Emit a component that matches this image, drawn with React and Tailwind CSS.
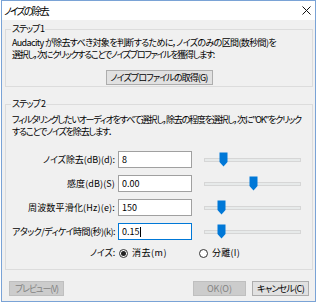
import React, { useLayoutEffect, useRef, useState } from "react";

const font = { fontFamily: '"Noto Sans CJK JP", "Noto Sans", sans-serif' };

// Squeeze/stretch a line of text to the width it has in the original dialog
const Fit = ({ w, children, className = "" }) => {
  const ref = useRef(null);
  const [ls, setLs] = useState(0);

  useLayoutEffect(() => {
    const el = ref.current;
    if (!el) return;
    const n = [...el.textContent].length;
    const natural = el.getBoundingClientRect().width;
    setLs((w - natural) / n);
  }, [w]);

  return (
    <span
      ref={ref}
      className={`inline-block whitespace-nowrap ${className}`}
      style={{ letterSpacing: `${ls}px` }}
    >
      {children}
    </span>
  );
};

// Slider thumb shaped like the Windows trackbar pointer
const Thumb = () => (
  <svg width="9" height="15" viewBox="0 0 9 15" className="block">
    <path d="M0.5 0.5 H8.5 V10 L4.5 14.5 L0.5 10 Z" fill="#0078d7" />
  </svg>
);

const Slider = ({ pos }) => (
  <div className="relative w-[97px] h-[17px] flex items-center">
    <div className="w-full h-[4px] bg-[#e7eaea] border border-[#d6d6d6]" />
    <div className="absolute top-[1px]" style={{ left: `${pos}px` }}>
      <Thumb />
    </div>
  </div>
);

const rows = [
  { label: "ノイズ除去(dB)(d):", w: 72, value: "8", pos: 15 },
  { label: "感度(dB)(S)", w: 48, value: "0.00", pos: 45 },
  { label: "周波数平滑化(Hz)(e):", w: 87, value: "150", pos: 13 },
  { label: "アタック/ディケイ時間(秒)(k):", w: 103, value: "0.15", pos: 13, focus: true },
];

const Radio = ({ checked, label, w }) => (
  <div className="flex items-center gap-[4px]">
    <div className="w-[9px] h-[9px] rounded-full border border-[#333] bg-white flex items-center justify-center">
      {checked && <div className="w-[5px] h-[5px] rounded-full bg-[#222]" />}
    </div>
    <Fit w={w}>{label}</Fit>
  </div>
);

const App = () => {
  return (
    <div
      className="w-[320px] h-[303px] bg-white text-[9px] leading-[12px] whitespace-nowrap text-black [font-feature-settings:'palt']"
      style={font}
    >
      <div className="ml-[1px] w-[315px] h-[302px] border border-[#7aa3d6] bg-[#f0f0f0] flex flex-col overflow-hidden">
        {/* Title bar */}
        <div className="h-[19px] shrink-0 bg-white flex items-center justify-between pl-[2px] pr-[4px]">
          <Fit w={44} className="text-[10px]">ノイズの除去</Fit>
          <svg width="9" height="9" viewBox="0 0 9 9">
            <path d="M0.5 0.5 L8.5 8.5 M8.5 0.5 L0.5 8.5" stroke="#111" strokeWidth="1" />
          </svg>
        </div>

        <div className="flex flex-col pl-[3px] pr-[2px] pt-[3px]">
          {/* Step 1 */}
          <fieldset className="border border-[#dcdcdc] px-[6px] pb-[1px] min-w-0">
            <legend className="px-[1px] ml-[-1px]">
              <Fit w={32}>ステップ 1</Fit>
            </legend>
            <div className="mt-[2px]">
              <Fit w={264}>Audacity が除去すべき対象を判断するために，ノイズのみの区間(数秒間)を</Fit>
            </div>
            <div>
              <Fit w={202}>選択し，次にクリックすることでノイズプロファイルを獲得します:</Fit>
            </div>
            <div className="flex justify-center mt-[9px]">
              <button className="h-[15px] w-[107px] bg-[#e1e1e1] border border-[#adadad] flex items-center justify-center">
                <Fit w={97}>ノイズプロファイルの取得(G)</Fit>
              </button>
            </div>
          </fieldset>

          {/* Step 2 */}
          <fieldset className="border border-[#dcdcdc] px-[6px] mt-[11px] pb-[10px] min-w-0">
            <legend className="px-[1px] ml-[-1px]">
              <Fit w={33}>ステップ 2</Fit>
            </legend>
            <div className="mt-[4px]">
              <Fit w={289}>フィルタリングしたいオーディオをすべて選択し，除去の程度を選択し，次に"OK"をクリック</Fit>
            </div>
            <div>
              <Fit w={100}>することでノイズを除去します．</Fit>
            </div>

            <div className="flex flex-col gap-[7px] mt-[13px]">
              {rows.map((r) => (
                <div key={r.label} className="flex items-center">
                  <div className="w-[103px] flex justify-end">
                    <Fit w={r.w}>{r.label}</Fit>
                  </div>
                  <div
                    className={`ml-[3px] w-[74px] h-[17px] bg-white border flex items-center px-[3px] ${
                      r.focus ? "border-[#0078d7]" : "border-[#a0a0a0]"
                    }`}
                  >
                    {r.value}
                    {r.focus && <span className="w-[1px] h-[10px] bg-black" />}
                  </div>
                  <div className="ml-[12px]">
                    <Slider pos={r.pos} />
                  </div>
                </div>
              ))}
              <div className="flex items-center">
                <div className="w-[103px] flex justify-end">
                  <Fit w={25}>ノイズ:</Fit>
                </div>
                <div className="ml-[4px] w-[80px]">
                  <Radio checked label="消去(m)" w={35} />
                </div>
                <Radio label="分離(I)" w={28} />
              </div>
            </div>
          </fieldset>

          {/* Buttons */}
          <div className="flex items-center mt-[11px] px-[4px]">
            <button className="h-[15px] w-[55px] bg-[#cccccc] border border-[#bfbfbf] text-[#838383] flex items-center justify-center">
              <Fit w={43}>プレビュー(V)</Fit>
            </button>
            <div className="flex-1" />
            <button className="h-[15px] w-[53px] bg-[#cccccc] border border-[#bfbfbf] text-[#838383] flex items-center justify-center">
              <Fit w={25}>OK(O)</Fit>
            </button>
            <button className="h-[15px] w-[57px] ml-[6px] bg-[#e1e1e1] border border-[#adadad] flex items-center justify-center">
              <Fit w={47}>キャンセル(C)</Fit>
            </button>
          </div>
        </div>
      </div>
    </div>
  );
};

export default App;
